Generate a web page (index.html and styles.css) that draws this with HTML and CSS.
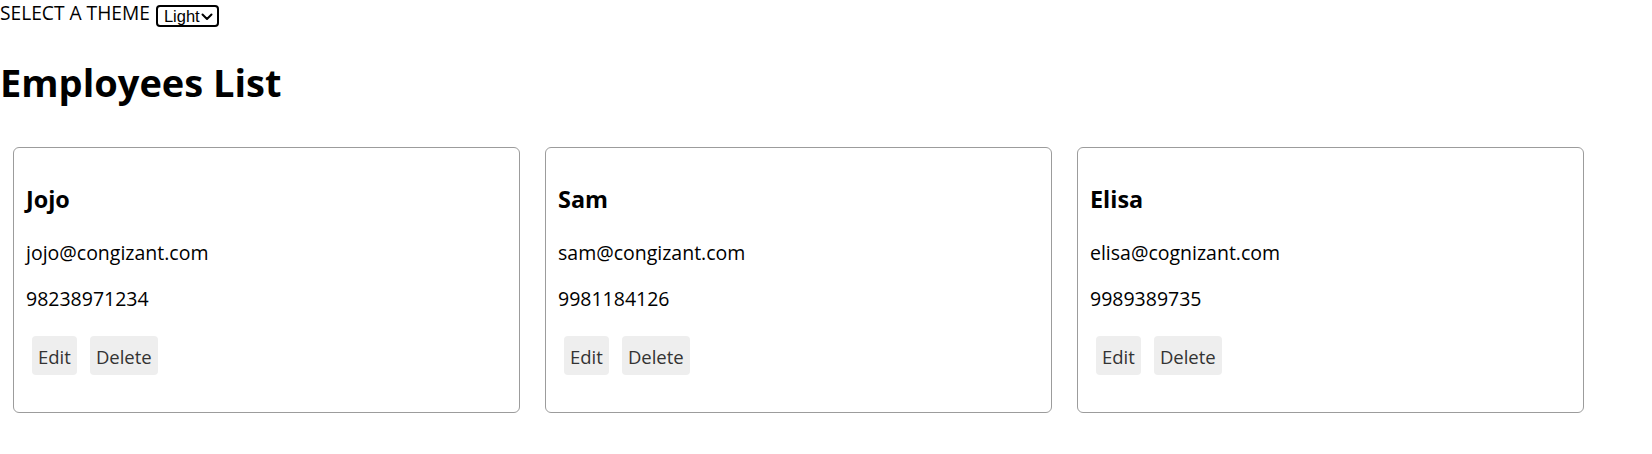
FILE: index.html
```html
<!DOCTYPE html>
<html lang="en">
<head>
<meta charset="utf-8">
<title>Employees List</title>
<link rel="stylesheet" href="styles.css">
</head>
<body>
<div class="theme-bar">
  <label class="theme-label" for="theme">SELECT A THEME</label>
  <span class="select-wrap">
    <select id="theme" class="theme-select">
      <option>Light</option>
      <option>Dark</option>
    </select>
    <svg class="chevron" width="12" height="8" viewBox="0 0 12 8" aria-hidden="true"><path d="M1.5 1.5 L6 6 L10.5 1.5" fill="none" stroke="#000" stroke-width="2" stroke-linecap="round" stroke-linejoin="round"/></svg>
  </span>
</div>
<h1 class="page-title">Employees List</h1>
<div class="card-list">
  <div class="card">
    <h3 class="card-name">Jojo</h3>
    <p class="card-line">jojo@congizant.com</p>
    <p class="card-line">98238971234</p>
    <div class="card-actions">
      <button class="btn">Edit</button>
      <button class="btn">Delete</button>
    </div>
  </div>
  <div class="card">
    <h3 class="card-name">Sam</h3>
    <p class="card-line">sam@congizant.com</p>
    <p class="card-line">9981184126</p>
    <div class="card-actions">
      <button class="btn">Edit</button>
      <button class="btn">Delete</button>
    </div>
  </div>
  <div class="card">
    <h3 class="card-name">Elisa</h3>
    <p class="card-line">elisa@cognizant.com</p>
    <p class="card-line">9989389735</p>
    <div class="card-actions">
      <button class="btn">Edit</button>
      <button class="btn">Delete</button>
    </div>
  </div>
</div>
</body>
</html>
```
FILE: styles.css
```css
html, body {
  margin: 0;
  padding: 0;
  background: #ffffff;
  color: #000000;
  font-family: "Open Sans", "Noto Sans", sans-serif;
}

.theme-bar {
  display: flex;
  align-items: flex-start;
  height: 27px;
}

.theme-label {
  font-size: 19.2px;
  line-height: 26px;
}

.select-wrap {
  position: relative;
  display: inline-block;
  margin-left: 6px;
  margin-top: 5px;
}

.theme-select {
  -webkit-appearance: none;
  appearance: none;
  box-sizing: border-box;
  width: 63px;
  height: 22px;
  margin: 0;
  padding: 0 0 0 6px;
  border: 2px solid #000;
  border-radius: 4px;
  background: #fff;
  color: #000;
  font-family: "Liberation Sans", Arial, sans-serif;
  font-size: 16.5px;
  line-height: 18px;
  display: block;
}

.chevron {
  position: absolute;
  left: 45px;
  top: 8px;
  pointer-events: none;
}

.page-title {
  font-size: 38px;
  font-weight: 700;
  line-height: 50px;
  margin: 30px 0 27px 0;
}

.card-list {
  display: flex;
  align-items: flex-start;
  gap: 25px;
  padding: 13px 0 0 13px;
}

.card {
  box-sizing: border-box;
  width: 507px;
  margin: 0;
  padding: 12px;
  border: 1px solid #9c9c9c;
  border-radius: 6px;
}

.card-name {
  font-size: 23.4px;
  font-weight: 700;
  line-height: 32px;
  margin: 23px 0 25px 0;
}

.card-line {
  font-size: 19.5px;
  line-height: 26px;
  margin: 20px 0;
}

.card-actions {
  display: flex;
  gap: 13px;
  margin: 24px 0 25px 6px;
}

.btn {
  font-family: "Open Sans", "Noto Sans", sans-serif;
  font-size: 18.5px;
  line-height: 26px;
  color: #333333;
  background: #eeeeee;
  border: none;
  border-radius: 4px;
  padding: 8px 6px 5px 6px;
  margin: 0;
}
```
